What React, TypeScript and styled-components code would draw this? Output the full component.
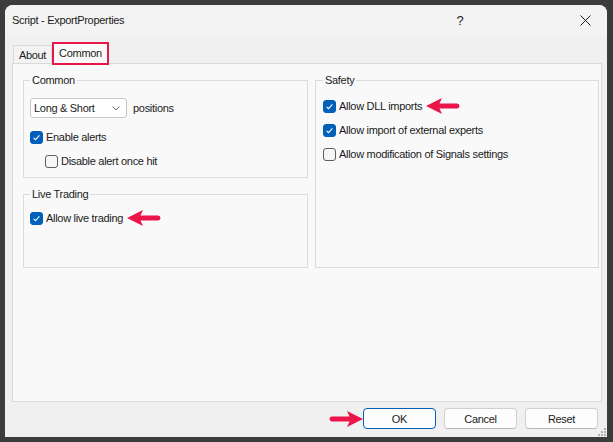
import React from "react";
import styled, { createGlobalStyle } from "styled-components";

const GlobalStyle = createGlobalStyle`
  html, body {
    margin: 0;
    padding: 0;
    background: #3c3c3c;
  }
  body {
    font-family: "Liberation Sans", Arial, sans-serif;
    font-size: 11px;
    letter-spacing: -0.3px;
    color: #1b1b1b;
  }
`;

const Desktop = styled.div`
  width: 613px;
  height: 442px;
  box-sizing: border-box;
  padding: 5px 6px 5px 5px;
  background: #3c3c3c;
  display: flex;
`;

const Window = styled.div`
  position: relative;
  flex: 1;
  display: flex;
  flex-direction: column;
  background: #f0f0f0;
  border-radius: 8px 8px 0 0;
  overflow: hidden;
`;

const TitleBar = styled.div`
  height: 30px;
  flex-shrink: 0;
  display: flex;
  align-items: center;
  padding-left: 7px;
  background: #f3f3f3;
  .title {
    flex: 1;
  }
`;

const TitleButton = styled.div<{ $space?: number }>`
  width: 44px;
  height: 30px;
  display: flex;
  align-items: center;
  justify-content: center;
  margin-left: ${(p) => p.$space ?? 0}px;
  font-size: 13px;
  color: #1b1b1b;
`;

const Body = styled.div`
  flex: 1;
  display: flex;
  flex-direction: column;
  padding: 7px 5px 0 7px;
  min-height: 0;
`;

const TabStrip = styled.div`
  height: 21px;
  display: flex;
  align-items: flex-end;
  padding-left: 1px;
  position: relative;
  z-index: 1;
`;

const Tab = styled.div<{ $active?: boolean }>`
  box-sizing: border-box;
  display: flex;
  align-items: center;
  justify-content: center;
  height: ${(p) => (p.$active ? "23px" : "18px")};
  width: ${(p) => (p.$active ? "57px" : "39px")};
  margin-bottom: ${(p) => (p.$active ? "-2px" : "0")};
  padding-bottom: ${(p) => (p.$active ? "1px" : "0")};
  background: ${(p) => (p.$active ? "#f9f9f9" : "#f3f3f3")};
  border: ${(p) => (p.$active ? "2px solid #e8174a" : "1px solid #d9d9d9")};
  border-bottom: ${(p) => (p.$active ? "2px solid #e8174a" : "none")};
`;

const Panel = styled.div`
  flex: 1;
  border: 1px solid #d9d9d9;
  background: #f9f9f9;
  display: grid;
  grid-template-columns: 285px 284px;
  column-gap: 7px;
  align-items: start;
  align-content: start;
  padding: 9px 0 0 10px;
`;

const Column = styled.div`
  display: flex;
  flex-direction: column;
  gap: 9px;
`;

const Group = styled.fieldset<{ $height?: number; $pt?: number; $pl?: number }>`
  margin: 0;
  min-width: 0;
  box-sizing: border-box;
  border: 1px solid #dcdcdc;
  padding: ${(p) => p.$pt ?? 11}px 6px 8px ${(p) => p.$pl ?? 6}px;
  display: flex;
  flex-direction: column;
  height: ${(p) => (p.$height ? `${p.$height}px` : "auto")};
  align-self: stretch;
  legend {
    padding: 0 2px;
    line-height: 14px;
  }
`;

const Stack = styled.div<{ $gap: number }>`
  display: flex;
  flex-direction: column;
  gap: ${(p) => p.$gap}px;
`;

const Row = styled.div<{ $indent?: number }>`
  display: flex;
  align-items: center;
  height: 16px;
  gap: 3px;
  margin-left: ${(p) => p.$indent ?? 0}px;
`;

const InlineRow = styled.div`
  display: flex;
  align-items: center;
  gap: 6px;
  height: 20px;
`;

const Select = styled.div`
  box-sizing: border-box;
  width: 97px;
  height: 20px;
  display: flex;
  align-items: center;
  justify-content: space-between;
  padding: 0 6px 0 3px;
  border: 1px solid #c8c8c8;
  border-radius: 3px;
  background: #ffffff;
`;

const Box = styled.span<{ $checked?: boolean }>`
  box-sizing: border-box;
  width: 13px;
  height: 13px;
  border-radius: 3px;
  flex-shrink: 0;
  display: flex;
  align-items: center;
  justify-content: center;
  background: ${(p) => (p.$checked ? "#005fb8" : "#f6f6f6")};
  border: 1px solid ${(p) => (p.$checked ? "#005fb8" : "#5e5e5e")};
`;

const Footer = styled.div`
  height: 35px;
  flex-shrink: 0;
  display: flex;
  justify-content: flex-end;
  align-items: center;
  padding: 0 4px 2px 0;
  box-sizing: border-box;
`;

const Buttons = styled.div`
  display: flex;
  gap: 8px;
`;

const Button = styled.div<{ $primary?: boolean }>`
  box-sizing: border-box;
  width: 73px;
  height: 21px;
  display: flex;
  align-items: center;
  justify-content: center;
  background: #fdfdfd;
  border: 1px solid ${(p) => (p.$primary ? "#005fb8" : "#d0d0d0")};
  border-bottom-color: ${(p) => (p.$primary ? "#005fb8" : "#b8b8b8")};
  border-radius: 4px;
`;

const Pointer = styled.svg<{ $flip?: boolean; $gap?: number }>`
  width: 34px;
  height: 18px;
  flex-shrink: 0;
  margin-left: ${(p) => p.$gap ?? 0}px;
  transform: ${(p) => (p.$flip ? "scaleX(-1)" : "none")};
`;

const Grip = styled.svg`
  position: absolute;
  right: 1px;
  bottom: 1px;
  width: 8px;
  height: 8px;
`;

function Arrow({ flip, gap }: { flip?: boolean; gap?: number }) {
  return (
    <Pointer viewBox="0 0 34 18" $flip={flip} $gap={gap}>
      <path
        d="M0 9 L16 1 L13.5 6.5 L31 6.5 A2.5 2.5 0 0 1 31 11.5 L13.5 11.5 L16 17 Z"
        fill="#ec1549"
      />
    </Pointer>
  );
}

function Check({ checked, label, indent, arrow }: { checked?: boolean; label: string; indent?: number; arrow?: boolean }) {
  return (
    <Row $indent={indent}>
      <Box $checked={checked}>
        {checked && (
          <svg width="11" height="11" viewBox="0 0 11 11">
            <path d="M2.6 5.8 L4.5 7.6 L8.4 3.4" stroke="#ffffff" strokeWidth="1.1" fill="none" />
          </svg>
        )}
      </Box>
      <span>{label}</span>
      {arrow && <Arrow gap={1} />}
    </Row>
  );
}

export default function App() {
  return (
    <>
      <GlobalStyle />
      <Desktop>
        <Window>
          <TitleBar>
            <span className="title">Script - ExportProperties</span>
            <TitleButton>?</TitleButton>
            <TitleButton $space={81}>
              <svg width="11" height="11" viewBox="0 0 11 11">
                <path d="M0.5 0.5 L10.5 10.5 M10.5 0.5 L0.5 10.5" stroke="#1b1b1b" strokeWidth="1" />
              </svg>
            </TitleButton>
          </TitleBar>
          <Body>
            <TabStrip>
              <Tab>About</Tab>
              <Tab $active>Common</Tab>
            </TabStrip>
            <Panel>
              <Column>
                <Group>
                  <legend>Common</legend>
                  <Stack $gap={11}>
                    <InlineRow>
                      <Select>
                        <span>Long &amp; Short</span>
                        <svg width="8" height="5" viewBox="0 0 8 5">
                          <path d="M0.5 0.5 L4 4 L7.5 0.5" stroke="#6a6a6a" strokeWidth="1" fill="none" />
                        </svg>
                      </Select>
                      <span>positions</span>
                    </InlineRow>
                    <Stack $gap={8}>
                      <Check checked label="Enable alerts" />
                      <Check label="Disable alert once hit" indent={15} />
                    </Stack>
                  </Stack>
                </Group>
                <Group $height={81} $pt={9}>
                  <legend>Live Trading</legend>
                  <Check checked label="Allow live trading" arrow />
                </Group>
              </Column>
              <Group $pl={7}>
                <legend>Safety</legend>
                <Stack $gap={8}>
                  <Check checked label="Allow DLL imports" arrow />
                  <Check checked label="Allow import of external experts" />
                  <Check label="Allow modification of Signals settings" />
                </Stack>
              </Group>
            </Panel>
            <Footer>
              <Arrow flip />
              <Buttons>
                <Button $primary>OK</Button>
                <Button>Cancel</Button>
                <Button>Reset</Button>
              </Buttons>
            </Footer>
          </Body>
          <Grip viewBox="0 0 8 8">
            <rect x="6" y="0" width="2" height="2" fill="#b0b0b0" />
            <rect x="3" y="3" width="2" height="2" fill="#b0b0b0" />
            <rect x="6" y="3" width="2" height="2" fill="#b0b0b0" />
            <rect x="0" y="6" width="2" height="2" fill="#b0b0b0" />
            <rect x="3" y="6" width="2" height="2" fill="#b0b0b0" />
            <rect x="6" y="6" width="2" height="2" fill="#b0b0b0" />
          </Grip>
        </Window>
      </Desktop>
    </>
  );
}
